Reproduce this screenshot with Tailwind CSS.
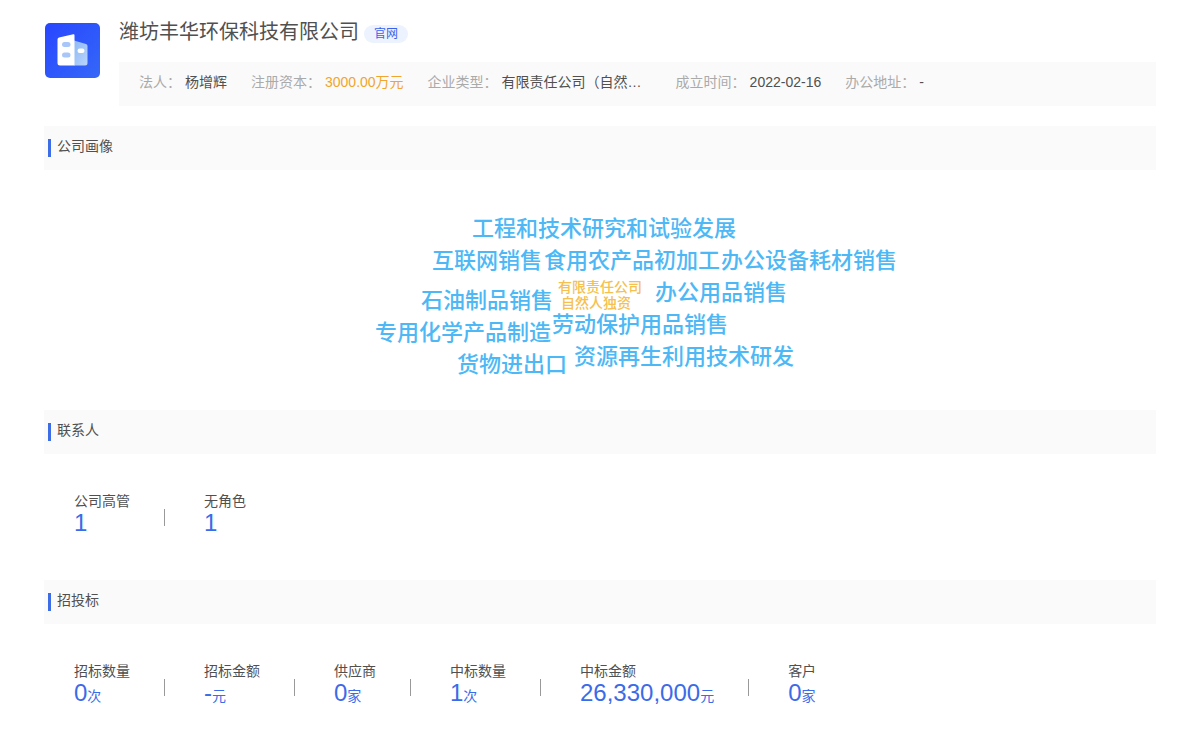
<!DOCTYPE html>
<html lang="zh-CN">
<head>
  <meta charset="UTF-8" />
  <title>潍坊丰华环保科技有限公司</title>
  <meta name="viewport" content="width=device-width, initial-scale=1.0" />
  <script src="https://cdn.jsdelivr.net/npm/@tailwindcss/browser@4"></script>
</head>

<body class="bg-white font-['Liberation_Sans','Noto_Sans_CJK_SC',sans-serif] text-sm text-[#505050]">
  <main class="px-11 pt-4">

    <!-- 公司信息 -->
    <header class="flex gap-[19px]">
      <svg class="mt-1.5 size-14 shrink-0" viewBox="0 0 56 56">
        <defs>
          <linearGradient id="logoBg" x1="0" y1="0" x2="1" y2="1">
            <stop offset="0" stop-color="#2846ff" />
            <stop offset="1" stop-color="#3468f8" />
          </linearGradient>
          <linearGradient id="logoSide" x1="0" y1="0" x2="1" y2="1">
            <stop offset="0" stop-color="#8db9f6" />
            <stop offset="1" stop-color="#b9d4fb" />
          </linearGradient>
        </defs>
        <rect x="1" y="1" width="55" height="55" rx="5" fill="url(#logoBg)" />
        <path d="M30 18.500 42 22q1.500.5 1.500 2V41q0 2.500-2.500 2.500H30z" fill="url(#logoSide)" />
        <path d="M15 15.500q-1.500.5-1.500 2V41q0 2.500 2.500 2.500H30.500V13.300q0-1.300-1.200-1z" fill="#fff" />
        <rect x="18" y="20" width="8.500" height="5" rx="2.500" fill="#a9c6f8" />
        <rect x="18" y="30.500" width="8.500" height="5" rx="2.500" fill="#a9c6f8" />
        <rect x="33.500" y="26.500" width="7" height="4.500" rx="2.200" fill="#fff" />
      </svg>
      <div class="min-w-0 flex-1">
        <div class="flex items-start gap-[5px]">
          <h1 class="text-xl leading-8">潍坊丰华环保科技有限公司</h1>
          <a href="#" class="mt-[9px] rounded-full bg-[#ecf3fe] px-2.5 text-xs leading-[18px] text-[#3a62e8]">官网</a>
        </div>
        <dl class="mt-3.5 flex h-11 gap-6 bg-[#fafafa] px-5 leading-10">
          <div class="flex gap-1">
            <dt class="text-[#aaa]">法人：</dt>
            <dd>杨增辉</dd>
          </div>
          <div class="flex gap-1">
            <dt class="text-[#aaa]">注册资本：</dt>
            <dd class="text-[#f0a52e]">3000.00万元</dd>
          </div>
          <div class="flex gap-1">
            <dt class="text-[#aaa]">企业类型：</dt>
            <dd class="w-[150px]">有限责任公司（自然…</dd>
          </div>
          <div class="flex gap-1">
            <dt class="text-[#aaa]">成立时间：</dt>
            <dd>2022-02-16</dd>
          </div>
          <div class="flex gap-1">
            <dt class="text-[#aaa]">办公地址：</dt>
            <dd>-</dd>
          </div>
        </dl>
      </div>
    </header>

    <!-- 公司画像 -->
    <section class="mt-5">
      <div class="flex h-11 items-center gap-1.5 bg-[#fafafa] px-1">
        <span class="h-[18px] w-[3px] bg-[#3c6ce6]"></span>
        <h2 class="pb-1 leading-5">公司画像</h2>
      </div>
      <div class="relative mx-auto h-60 w-[600px] text-[22px] leading-8 font-medium whitespace-nowrap text-[#4db8f5]">
        <span class="absolute top-[43px] left-[172px]">工程和技术研究和试验发展</span>
        <span class="absolute top-[75px] left-[132px]">互联网销售</span>
        <span class="absolute top-[75px] left-[244px]">食用农产品初加工</span>
        <span class="absolute top-[75px] left-[421px]">办公设备耗材销售</span>
        <span class="absolute top-[107px] left-[355px]">办公用品销售</span>
        <span class="absolute top-[115px] left-[121px]">石油制品销售</span>
        <span class="absolute top-[109px] left-[258px] text-sm leading-4 text-[#f5c04e]">有限责任公司</span>
        <span class="absolute top-[125px] left-[261px] text-sm leading-4 text-[#f5c04e]">自然人独资</span>
        <span class="absolute top-[139px] left-[252px]">劳动保护用品销售</span>
        <span class="absolute top-[147px] left-[75px]">专用化学产品制造</span>
        <span class="absolute top-[171px] left-[274px]">资源再生利用技术研发</span>
        <span class="absolute top-[179px] left-[157px]">货物进出口</span>
      </div>
    </section>

    <!-- 联系人 -->
    <section>
      <div class="flex h-11 items-center gap-1.5 bg-[#fafafa] px-1">
        <span class="h-[18px] w-[3px] bg-[#3c6ce6]"></span>
        <h2 class="pb-1 leading-5">联系人</h2>
      </div>
      <div class="flex items-center px-[30px] pt-[37px] pb-11">
        <div>
          <p class="leading-5">公司高管</p>
          <p class="h-[25px] leading-6 text-[#3a6be8]"><span class="text-2xl leading-6">1</span></p>
        </div>
        <i class="mt-2 mr-[39px] ml-[34px] h-[17px] w-px bg-[#999]"></i>
        <div>
          <p class="leading-5">无角色</p>
          <p class="h-[25px] leading-6 text-[#3a6be8]"><span class="text-2xl leading-6">1</span></p>
        </div>
      </div>
    </section>

    <!-- 招投标 -->
    <section>
      <div class="flex h-11 items-center gap-1.5 bg-[#fafafa] px-1">
        <span class="h-[18px] w-[3px] bg-[#3c6ce6]"></span>
        <h2 class="pb-1 leading-5">招投标</h2>
      </div>
      <div class="flex items-center px-[30px] pt-[37px]">
        <div>
          <p class="leading-5">招标数量</p>
          <p class="h-[25px] leading-6 text-[#3a6be8]"><span class="text-2xl leading-6">0</span>次</p>
        </div>
        <i class="mt-2 mr-[39px] ml-[34px] h-[17px] w-px bg-[#999]"></i>
        <div>
          <p class="leading-5">招标金额</p>
          <p class="h-[25px] leading-6 text-[#3a6be8]"><span class="text-2xl leading-6">-</span>元</p>
        </div>
        <i class="mt-2 mr-[39px] ml-[34px] h-[17px] w-px bg-[#999]"></i>
        <div>
          <p class="leading-5">供应商</p>
          <p class="h-[25px] leading-6 text-[#3a6be8]"><span class="text-2xl leading-6">0</span>家</p>
        </div>
        <i class="mt-2 mr-[39px] ml-[34px] h-[17px] w-px bg-[#999]"></i>
        <div>
          <p class="leading-5">中标数量</p>
          <p class="h-[25px] leading-6 text-[#3a6be8]"><span class="text-2xl leading-6">1</span>次</p>
        </div>
        <i class="mt-2 mr-[39px] ml-[34px] h-[17px] w-px bg-[#999]"></i>
        <div>
          <p class="leading-5">中标金额</p>
          <p class="h-[25px] leading-6 text-[#3a6be8]"><span class="text-2xl leading-6">26,330,000</span>元</p>
        </div>
        <i class="mt-2 mr-[39px] ml-[34px] h-[17px] w-px bg-[#999]"></i>
        <div>
          <p class="leading-5">客户</p>
          <p class="h-[25px] leading-6 text-[#3a6be8]"><span class="text-2xl leading-6">0</span>家</p>
        </div>
      </div>
    </section>

  </main>
</body>
</html>
